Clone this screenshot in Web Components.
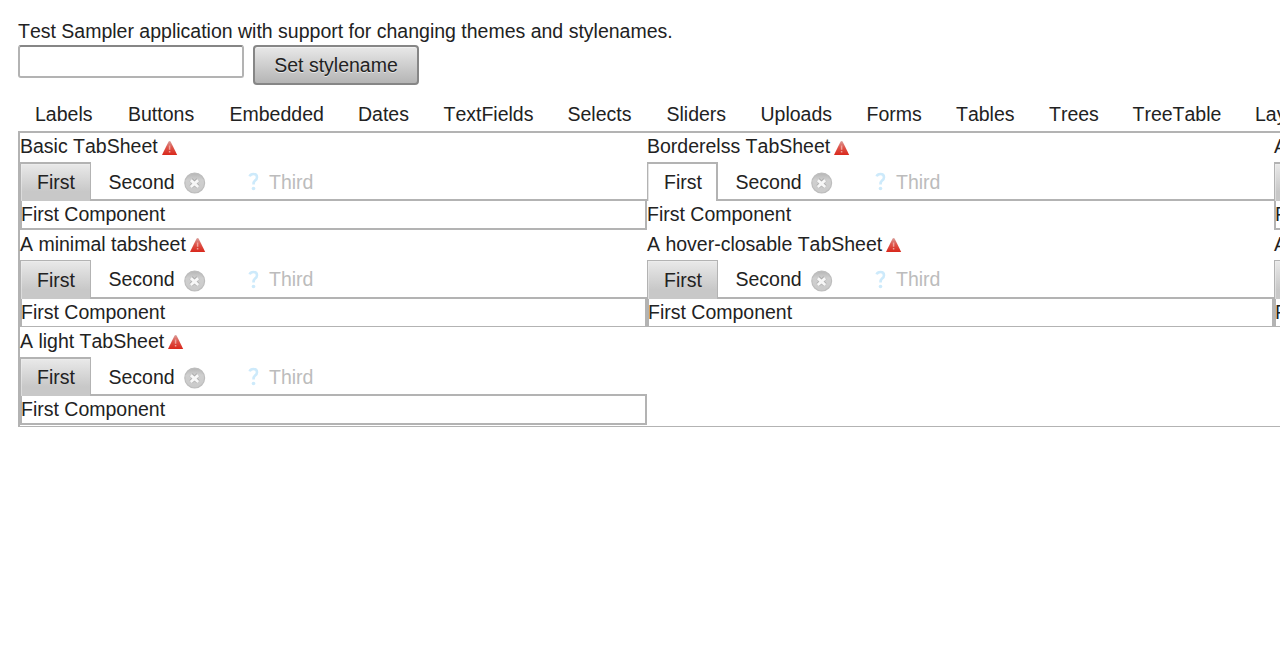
<!DOCTYPE html>
<html lang="en"><head><meta charset="utf-8"><title>Test Sampler</title>
<style>html,body{margin:0;overflow:hidden;background:#fff}</style></head>
<body><sampler-app></sampler-app>
<script>
class Base extends HTMLElement{
  connectedCallback(){ if(!this.shadowRoot) this.attachShadow({mode:'open'}).innerHTML=this.render(); }
}
customElements.define('error-icon',class extends Base{render(){return `<style>:host{display:block;width:17px;height:15px}svg{display:block}</style>
<svg width="17" height="15" viewBox="0 0 17 15"><defs><linearGradient id="g" x1="0" y1="0" x2="0" y2="1"><stop offset="0" stop-color="#d9a09c"/><stop offset=".45" stop-color="#dd554b"/><stop offset="1" stop-color="#d9281c"/></linearGradient></defs><path d="M7.6 1.6Q8.6 .2 9.6 1.6L16.2 15H1Z" fill="url(#g)"/><path d="M8.6 5.4V9.8M8.6 11V12.6" stroke="#f0a29b" stroke-width="1.5"/></svg>`}});
customElements.define('close-icon',class extends Base{render(){return `<style>:host{display:block;width:22px;height:22px}svg{display:block}</style>
<svg width="22" height="22" viewBox="0 0 22 22"><defs><linearGradient id="g" x1="0" y1="0" x2="0" y2="1"><stop offset="0" stop-color="#b6b6b6"/><stop offset=".35" stop-color="#cfcfcf"/><stop offset="1" stop-color="#cacaca"/></linearGradient></defs><circle cx="10.7" cy="11" r="9.9" fill="url(#g)" stroke="#bdbdbd" stroke-width="1.2"/><path d="M7 7.7L14 14.7M14 7.7L7 14.7" stroke="#acacac" stroke-width="4.4"/><path d="M6.8 8.1L14.2 15M14.2 8.1L6.8 15" stroke="#f7f7f7" stroke-width="2.9"/></svg>`}});
customElements.define('help-icon',class extends Base{render(){return `<style>:host{display:block;width:12px;height:19px}svg{display:block}</style>
<svg width="12" height="19" viewBox="0 0 12 19"><path d="M1.6 4.4Q2.5 2 5.5 2Q9 2 9 5.2Q9 7.2 7 8.6Q5.5 9.8 5.5 12.6" fill="none" stroke="#cdeafb" stroke-width="2.6"/><circle cx="5.5" cy="16.5" r="1.8" fill="#cdeafb"/></svg>`}});
customElements.define('text-input',class extends Base{render(){return `<style>:host{display:block;box-sizing:border-box;width:226px;height:33px;border:2px solid #b3b3b3;border-top-color:#868686;border-radius:3px;background:#fff}</style>`}});
customElements.define('push-button',class extends Base{render(){return `<style>:host{display:flex;box-sizing:border-box;width:166px;height:40px;border:2px solid #868686;border-radius:4px;background:linear-gradient(#e8e8e8,#b5b5b5);box-shadow:inset 0 1px #f1f1f1;justify-content:center;line-height:36px;text-shadow:0 1px #e6e6e6}</style><slot></slot>`}});
customElements.define('nav-tab',class extends Base{render(){return `<style>:host{display:block;flex:none;white-space:nowrap;line-height:24px;width:${this.getAttribute('width')}px}</style><slot></slot>`}});
customElements.define('tab-sheet',class extends Base{render(){return `<style>
:host{display:flex;flex-direction:column;width:627px;height:100%;--c:#b3b3b3;white-space:nowrap}
.cap{display:flex;height:29px;line-height:27px;gap:3px}
.cap error-icon{margin-top:7px}
.tabs{display:flex;height:39px;background:linear-gradient(var(--c),var(--c)) 0 100%/100% 2px no-repeat}
.first{box-sizing:border-box;width:71px;height:39px;border:solid var(--c);border-width:2px 1px 0;padding-left:16px;line-height:37px;background:linear-gradient(#e9e9e9,#c8c8c8 75%);box-shadow:inset 1px 1px #efefef80}
.sec{margin-left:17.5px;width:75.5px;line-height:40px}
close-icon{margin-top:10px}
help-icon{margin:10px 9px 0 42px}
.third{color:#bcbcbc;line-height:40px}
.body{box-sizing:border-box;flex:1;min-height:0;border:2px solid var(--c);border-top:0;line-height:26px}
.body span{margin-left:-1px}
:host([kind=minimal]) .cap,:host([kind=light]) .cap{height:30px;line-height:28px}
:host([kind=minimal]) .first{border-top-width:1px;line-height:39px}
:host([kind=minimal]) .sec,:host([kind=minimal]) .third{line-height:38px}
:host([kind=minimal]) .body{border-bottom-width:1px}
:host([kind=borderless]) .first{background:#fff;border-right-width:2px;box-shadow:inset 1px 0 #e4e4e4}
:host([kind=borderless]) .body{border:0}
:host([kind=borderless]) .body span{margin:0}
</style><div class="cap"><slot></slot><error-icon></error-icon></div>
<div class="tabs"><div class="first">First</div><div class="sec">Second</div><close-icon></close-icon><help-icon></help-icon><div class="third">Third</div></div>
<div class="body"><span>First Component</span></div>`}});
customElements.define('sampler-app',class extends Base{render(){
 const nav=[['Labels',93],['Buttons',101.5],['Embedded',128.5],['Dates',85.5],['TextFields',124],['Selects',99],['Sliders',94],['Uploads',106],['Forms',89.5],['Tables',93],['Trees',83.5],['TreeTable',122.5],['Layouts',80]];
 return `<style>:host{display:block;box-sizing:border-box;width:1280px;height:654px;overflow:hidden;padding:18px 0 0 18px;font:19.5px "Liberation Sans",Arial,sans-serif;font-kerning:none;color:#222}
.title{height:27px;line-height:27px}
.row{display:flex;gap:9px;align-items:flex-start;height:57px}
.nav{display:flex;height:29px;padding-left:17px}
.panel{box-sizing:border-box;width:1900px;height:296px;border:solid #b3b3b3;border-width:2px 0 1px 2px;display:grid;grid-template-columns:repeat(3,627px);grid-template-rows:97px 97px 98px}
</style><div class="title">Test Sampler application with support for changing themes and stylenames.</div>
<div class="row"><text-input></text-input><push-button>Set stylename</push-button></div>
<div class="nav">${nav.map(([t,w])=>`<nav-tab width="${w}">${t}</nav-tab>`).join('')}</div>
<div class="panel"><tab-sheet>Basic TabSheet</tab-sheet><tab-sheet kind="borderless">Borderelss TabSheet</tab-sheet><tab-sheet>A bar TabSheet</tab-sheet>
<tab-sheet kind="minimal">A minimal tabsheet</tab-sheet><tab-sheet kind="minimal">A hover-closable TabSheet</tab-sheet><tab-sheet kind="minimal">A selected-closable TabSheet</tab-sheet>
<tab-sheet kind="light">A light TabSheet</tab-sheet></div>`}});
</script></body></html>
